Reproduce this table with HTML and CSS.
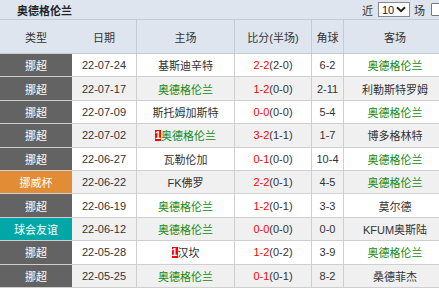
FILE: index.html
```html
<!DOCTYPE html>
<html lang="zh">
<head>
<meta charset="utf-8">
<title>奥德格伦兰</title>
<link rel="stylesheet" href="styles.css">
</head>
<body>
<div class="wrap">
  <div class="topbar">
    <span class="title">奥德格伦兰</span>
    <div class="filter">
      <span class="lbl">近</span>
      <span class="sel"><span class="selv">10</span><svg class="chev" width="10" height="7" viewBox="0 0 10 7"><path d="M1 1.2 L5 5.2 L9 1.2" fill="none" stroke="#222" stroke-width="2"/></svg></span>
      <span class="lbl">场</span>
      <span class="cbox"></span>
    </div>
  </div>
  <div class="row head">
    <div class="c t">类型</div>
    <div class="c d bl">日期</div>
    <div class="c bl">主场</div>
    <div class="c bl">比分(半场)</div>
    <div class="c bl">角球</div>
    <div class="c">客场</div>
  </div>

  <div class="row">
    <div class="c t gray">挪超</div>
    <div class="c d bl">22-07-24</div>
    <div class="c bl">基斯迪辛特</div>
    <div class="c bl"><span class="red">2-2</span>(2-0)</div>
    <div class="c bl">6-2</div>
    <div class="c green">奥德格伦兰</div>
  </div>
  <div class="row alt">
    <div class="c t gray">挪超</div>
    <div class="c d bl">22-07-17</div>
    <div class="c bl green">奥德格伦兰</div>
    <div class="c bl"><span class="red">1-2</span>(0-0)</div>
    <div class="c bl">2-11</div>
    <div class="c">利勒斯特罗姆</div>
  </div>
  <div class="row">
    <div class="c t gray">挪超</div>
    <div class="c d bl">22-07-09</div>
    <div class="c bl">斯托姆加斯特</div>
    <div class="c bl"><span class="red">0-0</span>(0-0)</div>
    <div class="c bl">5-4</div>
    <div class="c green">奥德格伦兰</div>
  </div>
  <div class="row alt">
    <div class="c t gray">挪超</div>
    <div class="c d bl">22-07-02</div>
    <div class="c bl green"><span class="card">1</span>奥德格伦兰</div>
    <div class="c bl"><span class="red">3-2</span>(1-1)</div>
    <div class="c bl">1-7</div>
    <div class="c">博多格林特</div>
  </div>
  <div class="row">
    <div class="c t gray">挪超</div>
    <div class="c d bl">22-06-27</div>
    <div class="c bl">瓦勒伦加</div>
    <div class="c bl"><span class="red">0-1</span>(0-0)</div>
    <div class="c bl">10-4</div>
    <div class="c green">奥德格伦兰</div>
  </div>
  <div class="row alt">
    <div class="c t orange">挪威杯</div>
    <div class="c d bl">22-06-22</div>
    <div class="c bl">FK佛罗</div>
    <div class="c bl"><span class="red">2-2</span>(0-1)</div>
    <div class="c bl">4-5</div>
    <div class="c green">奥德格伦兰</div>
  </div>
  <div class="row">
    <div class="c t gray">挪超</div>
    <div class="c d bl">22-06-19</div>
    <div class="c bl green">奥德格伦兰</div>
    <div class="c bl"><span class="red">1-2</span>(0-1)</div>
    <div class="c bl">3-3</div>
    <div class="c">莫尔德</div>
  </div>
  <div class="row alt">
    <div class="c t teal">球会友谊</div>
    <div class="c d bl">22-06-12</div>
    <div class="c bl green">奥德格伦兰</div>
    <div class="c bl"><span class="red">0-0</span>(0-0)</div>
    <div class="c bl">0-0</div>
    <div class="c">KFUM奥斯陆</div>
  </div>
  <div class="row">
    <div class="c t gray">挪超</div>
    <div class="c d bl">22-05-28</div>
    <div class="c bl"><span class="card">1</span>汉坎</div>
    <div class="c bl"><span class="red">1-2</span>(0-2)</div>
    <div class="c bl">3-9</div>
    <div class="c green">奥德格伦兰</div>
  </div>
  <div class="row alt">
    <div class="c t gray">挪超</div>
    <div class="c d bl">22-05-25</div>
    <div class="c bl green">奥德格伦兰</div>
    <div class="c bl"><span class="red">0-1</span>(0-1)</div>
    <div class="c bl">8-2</div>
    <div class="c">桑德菲杰</div>
  </div>
</div>
</body>
</html>
```

FILE: styles.css
```css
html, body {
  margin: 0;
  padding: 0;
  overflow: hidden;
  background: #fff;
}
body {
  font-family: "Liberation Sans", "Noto Sans CJK SC", sans-serif;
  font-size: 11px;
  color: #333;
}
.wrap {
  width: 446px;
}
.topbar {
  height: 19px;
  background: #dee5ee;
  border-bottom: 1px solid #c3cbd4;
  display: flex;
  align-items: center;
  justify-content: space-between;
  padding: 0 2px 0 17px;
}
.title {
  font-weight: bold;
  color: #222;
  font-size: 11px;
}
.filter {
  display: flex;
  align-items: center;
}
.lbl {
  color: #333;
  font-size: 11px;
}
.sel {
  width: 32px;
  height: 15px;
  box-sizing: border-box;
  border: 1px solid #8a8a8a;
  background: #fff;
  margin: 0 4px 0 5px;
  display: flex;
  align-items: center;
  justify-content: space-between;
  padding: 0 3px 0 3px;
  font-size: 11px;
  color: #222;
}
.chev {
  display: block;
}
.cbox {
  width: 11px;
  height: 11px;
  border: 1px solid #777;
  background: #fff;
  margin-left: 6px;
  border-radius: 1px;
}
.row {
  display: grid;
  grid-template-columns: 72px 65px 98px 77px 32px 1fr;
  height: 23.4px;
  box-sizing: border-box;
  border-bottom: 1px solid #cfcfcf;
  background: #fff;
}
.row.alt {
  background: #f0f0f0;
}
.row.head {
  height: 34px;
  background: #dee5ee;
  border-bottom: 1px solid #c3cbd4;
}
.c {
  display: flex;
  align-items: center;
  justify-content: center;
  white-space: nowrap;
}
.c.bl {
  border-right: 1px solid #cfcfcf;
}
.head .c.bl {
  border-right-color: #c3cbd4;
}
.head .c.d {
  border-right-color: #c3cbd4;
}
.t {
  color: #fff;
}
.head .t {
  color: #333;
}
.gray { background: #636363; }
.orange { background: #e38c36; }
.teal { background: #00a7a6; }
.green { color: #138a13; }
.red { color: #f00; }
.card {
  display: inline-block;
  background: #f00;
  color: #fff;
  font-weight: bold;
  font-size: 10px;
  line-height: 11px;
  width: 6px;
  text-align: center;
  margin-right: 0;
}
```
